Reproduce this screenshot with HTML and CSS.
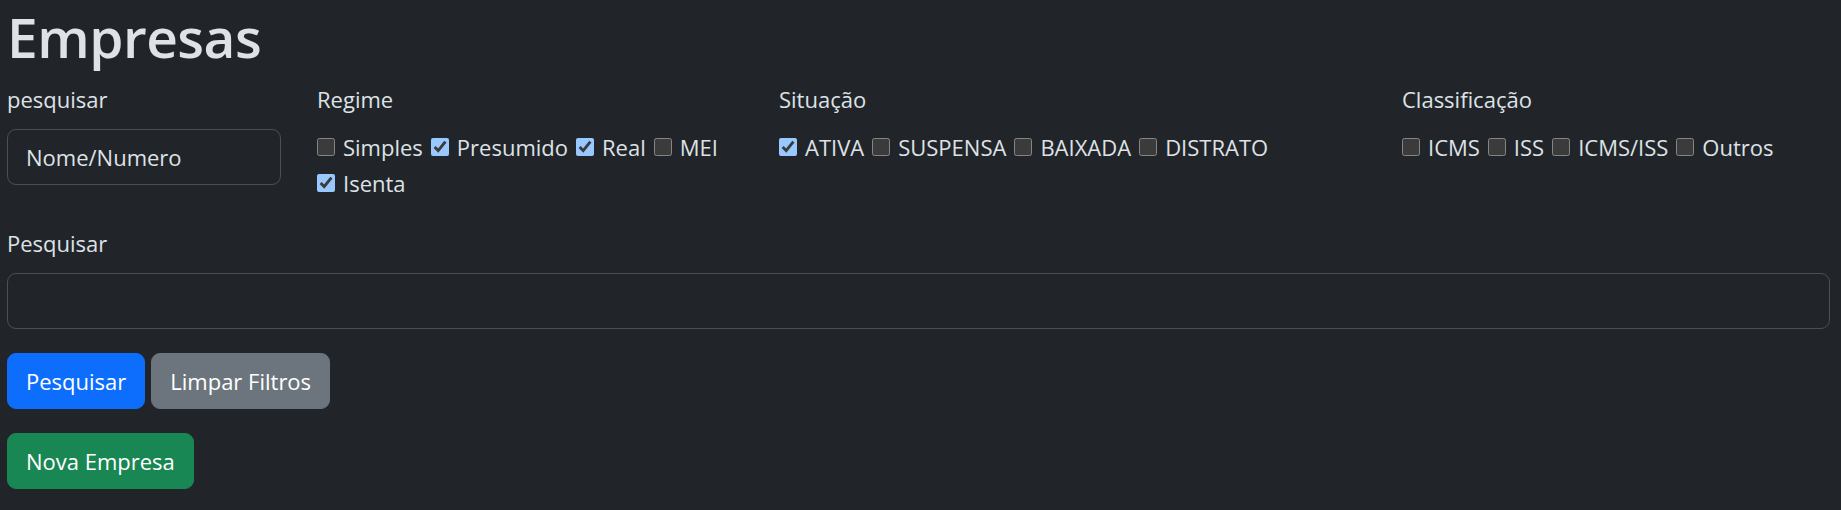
FILE: index.html
```html
<!DOCTYPE html>
<html lang="pt-BR">
<head>
<meta charset="utf-8">
<title>Empresas</title>
<link rel="stylesheet" href="styles.css">
</head>
<body>
<main class="page">
  <h1 class="title">Empresas</h1>
  <div class="filters">
    <div class="col">
      <label class="label" for="q">pesquisar</label>
      <input class="field" id="q" type="text" value="Nome/Numero">
    </div>
    <div class="col">
      <div class="label">Regime</div>
      <div class="checks">
        <label class="check"><input type="checkbox">Simples</label>
        <label class="check"><input type="checkbox" checked>Presumido</label>
        <label class="check"><input type="checkbox" checked>Real</label>
        <label class="check"><input type="checkbox">MEI</label>
        <label class="check"><input type="checkbox" checked>Isenta</label>
      </div>
    </div>
    <div class="col">
      <div class="label">Situação</div>
      <div class="checks">
        <label class="check"><input type="checkbox" checked>ATIVA</label>
        <label class="check"><input type="checkbox">SUSPENSA</label>
        <label class="check"><input type="checkbox">BAIXADA</label>
        <label class="check"><input type="checkbox">DISTRATO</label>
      </div>
    </div>
    <div class="col">
      <div class="label">Classificação</div>
      <div class="checks">
        <label class="check"><input type="checkbox">ICMS</label>
        <label class="check"><input type="checkbox">ISS</label>
        <label class="check"><input type="checkbox">ICMS/ISS</label>
        <label class="check"><input type="checkbox">Outros</label>
      </div>
    </div>
  </div>
  <div class="search">
    <label class="label" for="s">Pesquisar</label>
    <input class="field wide" id="s" type="text">
  </div>
  <div class="actions">
    <button class="btn btn-blue" type="button">Pesquisar</button>
    <button class="btn btn-grey" type="button">Limpar Filtros</button>
  </div>
  <div class="actions">
    <button class="btn btn-green" type="button">Nova Empresa</button>
  </div>
</main>
</body>
</html>
```

FILE: styles.css
```css
html, body {
  margin: 0;
  padding: 0;
  background: #212529;
  color-scheme: dark;
}
body {
  color: #dee2e6;
  font-family: "Open Sans", "Noto Sans", "Liberation Sans", sans-serif;
  font-size: 22px;
  line-height: 36px;
}
.page {
  padding: 1px 11px 0 7px;
}
.title {
  margin: 0 0 8px;
  font-size: 55px;
  line-height: 72px;
  font-weight: 600;
  letter-spacing: -0.5px;
  color: #dee2e6;
}
.filters {
  display: grid;
  grid-template-columns: 274px 426px 587px 1fr;
  column-gap: 36px;
  margin-bottom: 24px;
}
.label {
  display: block;
  margin-bottom: 12px;
}
.field {
  display: block;
  box-sizing: border-box;
  width: 100%;
  height: 56px;
  padding: 9px 18px;
  font: inherit;
  color: #dee2e6;
  background: #212529;
  border: 1.5px solid #495057;
  border-radius: 9px;
  outline: none;
}
.checks {
  display: flex;
  flex-wrap: wrap;
  column-gap: 8px;
}
.check {
  display: inline-flex;
  align-items: center;
  gap: 8px;
  height: 36px;
}
.check input {
  width: 18px;
  height: 18px;
  margin: 0;
  color-scheme: dark;
}
.search {
  margin-bottom: 24px;
}
.actions {
  display: flex;
  gap: 6px;
  margin-bottom: 24px;
}
.btn {
  box-sizing: border-box;
  height: 56px;
  padding: 9px 18px;
  font: inherit;
  color: #fff;
  border: 1.5px solid transparent;
  border-radius: 9px;
}
.btn-blue { background: #0d6efd; border-color: #0d6efd; }
.btn-grey { background: #6c757d; border-color: #6c757d; }
.btn-green { background: #198754; border-color: #198754; }
```
